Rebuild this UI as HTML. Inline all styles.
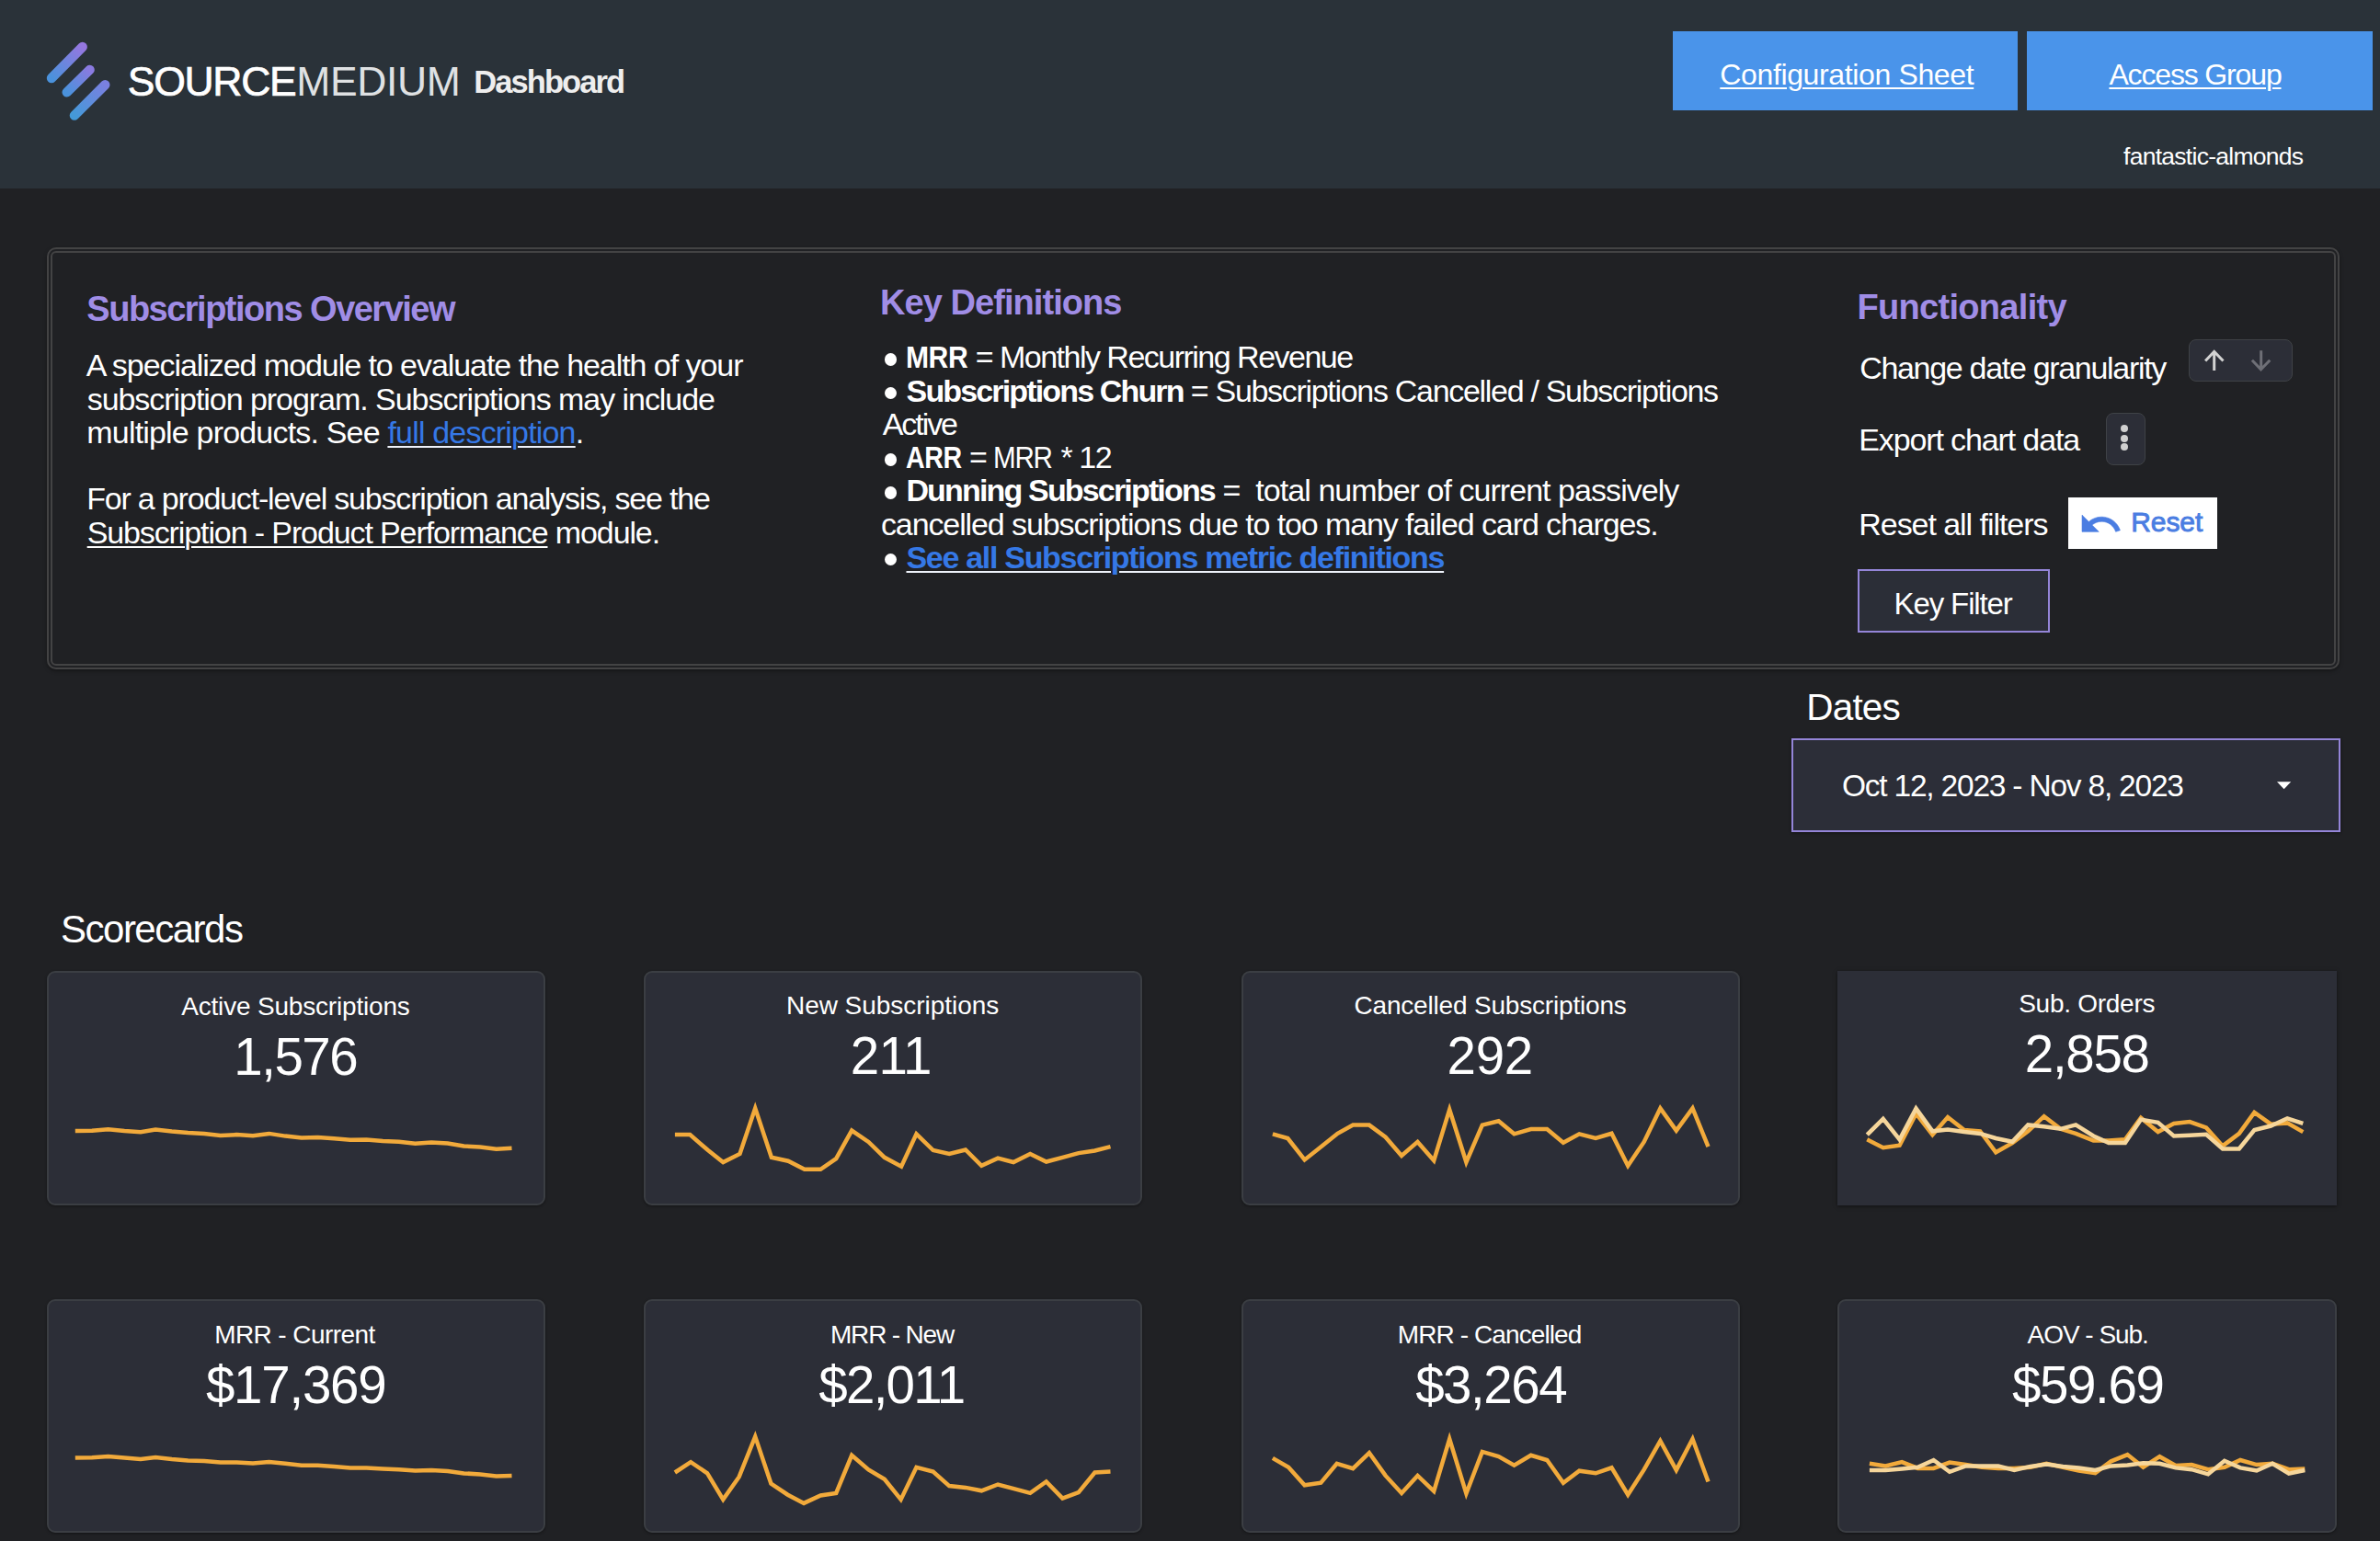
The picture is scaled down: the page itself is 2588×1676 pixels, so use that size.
<!DOCTYPE html><html><head><meta charset="utf-8"><style>
html,body{margin:0;padding:0;}
body{width:2588px;height:1676px;background:#202124;position:relative;overflow:hidden;font-family:"Liberation Sans",sans-serif;}
.t{position:absolute;white-space:pre;}
.b{position:absolute;box-sizing:border-box;}
u{text-decoration:underline;text-decoration-thickness:2px;text-underline-offset:3px;}
</style></head><body>
<div class="b" style="left:0.0px;top:0.0px;width:2588.0px;height:205.0px;background:#2a3239;"></div>
<svg style="position:absolute;left:0;top:0" width="140" height="140">
<defs><linearGradient id="lg1" x1="56" y1="85" x2="89.7" y2="51" gradientUnits="userSpaceOnUse">
<stop offset="0" stop-color="#4a92dc"/><stop offset="1" stop-color="#9577e0"/></linearGradient>
<linearGradient id="lg2" x1="72.7" y1="100.4" x2="97.6" y2="75.9" gradientUnits="userSpaceOnUse">
<stop offset="0" stop-color="#4a92dc"/><stop offset="1" stop-color="#8a7ae0"/></linearGradient>
<linearGradient id="lg3" x1="80.9" y1="125.6" x2="114.3" y2="92.2" gradientUnits="userSpaceOnUse">
<stop offset="0" stop-color="#4499d8"/><stop offset="1" stop-color="#7a80e0"/></linearGradient></defs>
<g stroke-width="10.4" stroke-linecap="round" fill="none">
<line x1="56" y1="85" x2="89.7" y2="51" stroke="url(#lg1)"/>
<line x1="72.7" y1="100.4" x2="97.6" y2="75.9" stroke="url(#lg2)"/>
<line x1="80.9" y1="125.6" x2="114.3" y2="92.2" stroke="url(#lg3)"/>
</g></svg>
<div class="b" style="left:1819.0px;top:34.0px;width:374.5px;height:85.5px;background:#4a94ea;"></div>
<div class="b" style="left:2204.0px;top:34.0px;width:375.5px;height:85.5px;background:#4a94ea;"></div>
<div class="b" style="left:50.6px;top:269.1px;width:2493.6px;height:458.6px;border:6px double #434344;border-radius:10px;box-shadow:0 2px 4px rgba(0,0,0,0.35);"></div>
<div class="b" style="left:961.8px;top:384.4px;width:13.6px;height:13.6px;background:#fff;border-radius:50%;"></div>
<div class="b" style="left:961.8px;top:420.6px;width:13.6px;height:13.6px;background:#fff;border-radius:50%;"></div>
<div class="b" style="left:961.8px;top:493.1px;width:13.6px;height:13.6px;background:#fff;border-radius:50%;"></div>
<div class="b" style="left:961.8px;top:529.4px;width:13.6px;height:13.6px;background:#fff;border-radius:50%;"></div>
<div class="b" style="left:961.8px;top:601.9px;width:13.6px;height:13.6px;background:#fff;border-radius:50%;"></div>
<div class="b" style="left:2380.0px;top:369.0px;width:112.6px;height:46.2px;background:#2c2e37;border:1.5px solid #3f4246;border-radius:8px;"></div>
<svg style="position:absolute;left:2380px;top:369px" width="113" height="47">
<g fill="none" stroke-width="3.0" stroke-linecap="butt">
<path d="M27.7 34.1V13.5 M18.1 23.5L27.7 13.4L37.5 23.5" stroke="#d2d2d2"/>
<path d="M78.7 12.3V33 M68.9 22.7L78.5 32.8L88.3 22.7" stroke="#6e6f76"/>
</g></svg>
<div class="b" style="left:2289.6px;top:448.7px;width:43.6px;height:57.2px;background:#2c2e37;border:1.5px solid #3f4246;border-radius:8px;"></div>
<div class="b" style="left:2306.1px;top:462.4px;width:8.0px;height:8.0px;background:#d0d0d0;border-radius:50%;"></div>
<div class="b" style="left:2306.1px;top:472.5px;width:8.0px;height:8.0px;background:#d0d0d0;border-radius:50%;"></div>
<div class="b" style="left:2306.1px;top:482.4px;width:8.0px;height:8.0px;background:#d0d0d0;border-radius:50%;"></div>
<div class="b" style="left:2249.0px;top:541.0px;width:162.0px;height:55.8px;background:#fff;"></div>
<svg style="position:absolute;left:2260px;top:545.5px" width="48.5" height="48.5" viewBox="0 0 24 24">
<path fill="#4a7de2" stroke="#4a7de2" stroke-width="0.3" d="M12.5 8c-2.65 0-5.05.99-6.9 2.6L2 7v9h9l-3.62-3.62c1.39-1.16 3.16-1.88 5.12-1.88 3.54 0 6.55 2.31 7.6 5.5l2.37-.78C21.08 11.03 17.15 8 12.5 8z"/></svg>
<div class="b" style="left:2020.0px;top:619.0px;width:208.8px;height:69.3px;background:#2b2e37;border:2px solid #9485d8;"></div>
<div class="b" style="left:1947.7px;top:803.3px;width:596.9px;height:101.9px;background:#2c2e38;border:2px solid #9485d8;box-shadow:0 1px 3px rgba(0,0,0,0.45);"></div>
<svg style="position:absolute;left:2474px;top:848px" width="20" height="12"><path d="M2 2.2H17.2L9.6 10.3Z" fill="#fff"/></svg>
<div class="b" style="left:50.8px;top:1056.2px;width:542.4px;height:254.4px;background:#2c2e37;border:2px solid #3b3e43;border-radius:9px;box-shadow:0 1px 3px rgba(0,0,0,0.4);"></div>
<div class="b" style="left:699.5px;top:1056.2px;width:542.4px;height:254.4px;background:#2c2e37;border:2px solid #3b3e43;border-radius:9px;box-shadow:0 1px 3px rgba(0,0,0,0.4);"></div>
<div class="b" style="left:1349.5px;top:1056.2px;width:542.4px;height:254.4px;background:#2c2e37;border:2px solid #3b3e43;border-radius:9px;box-shadow:0 1px 3px rgba(0,0,0,0.4);"></div>
<div class="b" style="left:1997.9px;top:1056.2px;width:543.4px;height:254.4px;background:#2c2e37;box-shadow:0 1px 4px rgba(0,0,0,0.5);"></div>
<div class="b" style="left:50.8px;top:1413.0px;width:542.4px;height:254.0px;background:#2c2e37;border:2px solid #3b3e43;border-radius:9px;box-shadow:0 1px 3px rgba(0,0,0,0.4);"></div>
<div class="b" style="left:699.5px;top:1413.0px;width:542.4px;height:254.0px;background:#2c2e37;border:2px solid #3b3e43;border-radius:9px;box-shadow:0 1px 3px rgba(0,0,0,0.4);"></div>
<div class="b" style="left:1349.5px;top:1413.0px;width:542.4px;height:254.0px;background:#2c2e37;border:2px solid #3b3e43;border-radius:9px;box-shadow:0 1px 3px rgba(0,0,0,0.4);"></div>
<div class="b" style="left:1997.9px;top:1413.0px;width:543.4px;height:254.0px;background:#2c2e37;border:2px solid #3b3e43;border-radius:9px;box-shadow:0 1px 3px rgba(0,0,0,0.4);"></div>
<div class="t" style="left:138.73px;top:60.78px;font-size:44.5px;line-height:56px;font-weight:400;color:#fff;letter-spacing:-1.266px;-webkit-text-stroke:0.7px #fff;">SOURCE</div>
<div class="t" style="left:322.30px;top:60.78px;font-size:44.5px;line-height:56px;font-weight:400;color:#dfe1e3;letter-spacing:-0.370px;">MEDIUM</div>
<div class="t" style="left:515.20px;top:67.55px;font-size:34.5px;line-height:43px;font-weight:700;color:#eeeeee;letter-spacing:-1.913px;">Dashboard</div>
<div class="t" style="left:1821.03px;top:60.61px;font-size:32px;line-height:40px;font-weight:400;color:#fff;letter-spacing:-0.365px;width:374.5px;text-align:center;"><u>Configuration Sheet</u></div>
<div class="t" style="left:2199.22px;top:60.61px;font-size:32px;line-height:40px;font-weight:400;color:#fff;letter-spacing:-1.154px;width:375.5px;text-align:center;"><u>Access Group</u></div>
<div class="t" style="left:2309.00px;top:154.02px;font-size:26.5px;line-height:33px;font-weight:400;color:#fff;letter-spacing:-0.725px;">fantastic-almonds</div>
<div class="t" style="left:94.37px;top:311.93px;font-size:38px;line-height:48px;font-weight:700;color:#a08de6;letter-spacing:-1.514px;">Subscriptions Overview</div>
<div class="t" style="left:93.69px;top:376.22px;font-size:34px;line-height:42px;font-weight:400;color:#fff;letter-spacing:-1.052px;">A specialized module to evaluate the health of your</div>
<div class="t" style="left:94.68px;top:412.52px;font-size:34px;line-height:42px;font-weight:400;color:#fff;letter-spacing:-1.044px;">subscription program. Subscriptions may include</div>
<div class="t" style="left:94.32px;top:448.82px;font-size:34px;line-height:42px;font-weight:400;color:#fff;letter-spacing:-0.815px;">multiple products. See <u style="color:#3578e6;text-decoration-color:#eef2fa">full description</u>.</div>
<div class="t" style="left:94.14px;top:521.42px;font-size:34px;line-height:42px;font-weight:400;color:#fff;letter-spacing:-1.188px;">For a product-level subscription analysis, see the</div>
<div class="t" style="left:94.68px;top:557.72px;font-size:34px;line-height:42px;font-weight:400;color:#fff;letter-spacing:-1.111px;"><u>Subscription - Product Performance</u> module.</div>
<div class="t" style="left:956.96px;top:305.33px;font-size:38px;line-height:48px;font-weight:700;color:#a08de6;letter-spacing:-0.934px;">Key Definitions</div>
<div class="t" style="left:985.22px;top:367.42px;font-size:34px;line-height:42px;font-weight:400;color:#fff;letter-spacing:-1.510px;"><b style="display:inline-block;width:67.5px;letter-spacing:-0.5px"><span style="display:inline-block;transform:scaleX(0.885);transform-origin:0 0">MRR</span></b> = Monthly Recurring Revenue</div>
<div class="t" style="left:985.58px;top:403.67px;font-size:34px;line-height:42px;font-weight:400;color:#fff;letter-spacing:-1.305px;"><b style="letter-spacing:-1.85px">Subscriptions Churn</b> = Subscriptions Cancelled / Subscriptions</div>
<div class="t" style="left:959.75px;top:439.92px;font-size:34px;line-height:42px;font-weight:400;color:#fff;letter-spacing:-2.062px;">Active</div>
<div class="t" style="left:985.04px;top:476.17px;font-size:34px;line-height:42px;font-weight:400;color:#fff;letter-spacing:-1.446px;"><b style="display:inline-block;width:61px;letter-spacing:-0.5px"><span style="display:inline-block;transform:scaleX(0.84);transform-origin:0 0">ARR</span></b> = <span style="display:inline-block;width:65px"><span style="display:inline-block;transform:scaleX(0.87);transform-origin:0 0">MRR</span></span> * 12</div>
<div class="t" style="left:985.40px;top:512.42px;font-size:34px;line-height:42px;font-weight:400;color:#fff;letter-spacing:-0.948px;"><b style="letter-spacing:-1.83px">Dunning Subscriptions</b> =  total number of current passively</div>
<div class="t" style="left:957.95px;top:548.67px;font-size:34px;line-height:42px;font-weight:400;color:#fff;letter-spacing:-1.105px;">cancelled subscriptions due to too many failed card charges.</div>
<div class="t" style="left:985.49px;top:584.92px;font-size:34px;line-height:42px;font-weight:700;color:#fff;letter-spacing:-1.302px;"><b><u style="color:#3578e6;text-decoration-color:#eef2fa">See all Subscriptions metric definitions</u></b></div>
<div class="t" style="left:2019.49px;top:310.03px;font-size:38px;line-height:48px;font-weight:700;color:#a08de6;letter-spacing:-0.693px;">Functionality</div>
<div class="t" style="left:2022.17px;top:379.22px;font-size:34px;line-height:42px;font-weight:400;color:#fff;letter-spacing:-1.308px;">Change date granularity</div>
<div class="t" style="left:2021.27px;top:456.82px;font-size:34px;line-height:42px;font-weight:400;color:#fff;letter-spacing:-1.126px;">Export chart data</div>
<div class="t" style="left:2021.27px;top:549.42px;font-size:34px;line-height:42px;font-weight:400;color:#fff;letter-spacing:-1.047px;">Reset all filters</div>
<div class="t" style="left:2317.22px;top:549.21px;font-size:30px;line-height:38px;font-weight:400;color:#4a7de2;letter-spacing:-0.073px;-webkit-text-stroke:0.9px #4a7de2;">Reset</div>
<div class="t" style="left:2019.25px;top:636.27px;font-size:33px;line-height:41px;font-weight:400;color:#fff;letter-spacing:-1.130px;width:208.8px;text-align:center;">Key Filter</div>
<div class="t" style="left:1964.32px;top:744.07px;font-size:40.5px;line-height:51px;font-weight:400;color:#fff;letter-spacing:-0.850px;">Dates</div>
<div class="t" style="left:2002.90px;top:834.39px;font-size:33.5px;line-height:42px;font-weight:400;color:#fff;letter-spacing:-1.206px;">Oct 12, 2023 - Nov 8, 2023</div>
<div class="t" style="left:66.05px;top:985.45px;font-size:42px;line-height:52px;font-weight:400;color:#fff;letter-spacing:-1.510px;">Scorecards</div>
<div class="t" style="left:50.23px;top:1076.60px;font-size:28px;line-height:35px;font-weight:400;color:#fff;letter-spacing:-0.183px;width:542.4px;text-align:center;">Active Subscriptions</div>
<div class="t" style="left:50.08px;top:1113.52px;font-size:56.5px;line-height:71px;font-weight:400;color:#fff;letter-spacing:-1.480px;width:542.4px;text-align:center;">1,576</div>
<div class="t" style="left:699.40px;top:1076.30px;font-size:28px;line-height:35px;font-weight:400;color:#fff;letter-spacing:-0.038px;width:542.4px;text-align:center;">New Subscriptions</div>
<div class="t" style="left:697.61px;top:1113.32px;font-size:56.5px;line-height:71px;font-weight:400;color:#fff;letter-spacing:-0.580px;width:542.4px;text-align:center;">211</div>
<div class="t" style="left:1349.38px;top:1076.30px;font-size:28px;line-height:35px;font-weight:400;color:#fff;letter-spacing:-0.183px;width:542.4px;text-align:center;">Cancelled Subscriptions</div>
<div class="t" style="left:1348.96px;top:1113.32px;font-size:56.5px;line-height:71px;font-weight:400;color:#fff;letter-spacing:-0.400px;width:542.4px;text-align:center;">292</div>
<div class="t" style="left:1997.51px;top:1074.40px;font-size:28px;line-height:35px;font-weight:400;color:#fff;letter-spacing:-0.267px;width:543.4px;text-align:center;">Sub. Orders</div>
<div class="t" style="left:1997.57px;top:1111.42px;font-size:56.5px;line-height:71px;font-weight:400;color:#fff;letter-spacing:-1.278px;width:543.4px;text-align:center;">2,858</div>
<div class="t" style="left:49.21px;top:1433.60px;font-size:28px;line-height:35px;font-weight:400;color:#fff;letter-spacing:-0.578px;width:542.4px;text-align:center;">MRR - Current</div>
<div class="t" style="left:50.50px;top:1471.22px;font-size:56.5px;line-height:71px;font-weight:400;color:#fff;letter-spacing:-1.240px;width:542.4px;text-align:center;">$17,369</div>
<div class="t" style="left:698.84px;top:1433.80px;font-size:28px;line-height:35px;font-weight:400;color:#fff;letter-spacing:-1.174px;width:542.4px;text-align:center;">MRR - New</div>
<div class="t" style="left:698.19px;top:1471.12px;font-size:56.5px;line-height:71px;font-weight:400;color:#fff;letter-spacing:-1.732px;width:542.4px;text-align:center;">$2,011</div>
<div class="t" style="left:1348.44px;top:1433.80px;font-size:28px;line-height:35px;font-weight:400;color:#fff;letter-spacing:-0.902px;width:542.4px;text-align:center;">MRR - Cancelled</div>
<div class="t" style="left:1349.99px;top:1471.12px;font-size:56.5px;line-height:71px;font-weight:400;color:#fff;letter-spacing:-1.462px;width:542.4px;text-align:center;">$3,264</div>
<div class="t" style="left:1998.52px;top:1434.30px;font-size:28px;line-height:35px;font-weight:400;color:#fff;letter-spacing:-1.030px;width:543.4px;text-align:center;">AOV - Sub.</div>
<div class="t" style="left:1998.58px;top:1471.02px;font-size:56.5px;line-height:71px;font-weight:400;color:#fff;letter-spacing:-1.408px;width:543.4px;text-align:center;">$59.69</div>
<svg style="position:absolute;left:0;top:0" width="2588" height="1676"><polyline points="81.8,1230.0 100.0,1229.7 117.6,1228.2 135.3,1230.0 152.9,1231.2 169.1,1228.5 186.8,1230.6 204.4,1232.1 222.1,1232.9 239.7,1235.0 257.4,1234.1 275.0,1235.3 292.6,1232.9 310.3,1235.6 327.9,1237.6 345.6,1237.1 363.2,1238.2 380.9,1239.7 398.5,1239.4 416.2,1240.9 433.8,1241.8 451.5,1243.8 469.1,1242.4 486.8,1243.5 504.4,1246.5 522.1,1247.6 539.7,1249.7 556.5,1248.8" fill="none" stroke="#f2aa3b" stroke-width="4.5" stroke-linejoin="miter" stroke-miterlimit="10"/><polyline points="733.9,1234.1 750.3,1234.1 769.9,1251.0 786.3,1264.0 804.5,1254.9 821.2,1205.4 838.9,1258.8 857.1,1262.7 874.8,1271.8 892.3,1271.8 909.2,1260.1 926.2,1229.6 944.4,1241.9 961.8,1258.8 980.1,1268.7 996.5,1233.3 1014.7,1251.0 1032.2,1254.9 1049.9,1250.5 1067.3,1267.9 1085.1,1259.6 1102.0,1264.0 1120.2,1254.9 1137.7,1263.5 1155.4,1258.8 1172.8,1254.1 1190.5,1251.5 1207.5,1247.1" fill="none" stroke="#f2aa3b" stroke-width="4.5" stroke-linejoin="miter" stroke-miterlimit="10"/><polyline points="1383.9,1233.3 1400.3,1238.0 1418.6,1261.4 1436.8,1247.1 1454.5,1232.8 1471.2,1223.6 1488.9,1223.6 1506.6,1236.7 1524.1,1257.0 1541.5,1241.9 1559.2,1262.2 1576.2,1206.7 1594.4,1264.0 1611.8,1223.6 1629.6,1219.2 1646.5,1233.3 1664.7,1228.1 1682.2,1228.1 1699.9,1242.7 1717.3,1233.3 1735.1,1238.0 1752.5,1232.8 1770.2,1267.9 1787.7,1241.9 1805.4,1205.4 1822.8,1229.6 1840.5,1205.4 1857.5,1247.1" fill="none" stroke="#f2aa3b" stroke-width="4.5" stroke-linejoin="miter" stroke-miterlimit="10"/><polyline points="81.8,1585.6 100.0,1585.3 117.6,1584.1 135.3,1585.6 152.9,1587.1 169.1,1585.0 186.8,1587.1 204.4,1588.5 222.1,1589.1 239.7,1590.6 257.4,1590.6 275.0,1591.5 292.6,1590.0 310.3,1591.8 327.9,1593.8 345.6,1593.8 363.2,1595.0 380.9,1596.5 398.5,1596.5 416.2,1597.4 433.8,1598.2 451.5,1599.4 469.1,1599.1 486.8,1600.0 504.4,1602.4 522.1,1603.5 539.7,1605.6 556.5,1605.0" fill="none" stroke="#f2aa3b" stroke-width="4.5" stroke-linejoin="miter" stroke-miterlimit="10"/><polyline points="733.9,1601.5 751.1,1590.1 769.1,1602.3 786.3,1630.9 803.7,1606.2 821.2,1562.4 838.4,1613.5 856.6,1625.7 874.1,1634.9 892.3,1626.5 909.2,1623.9 926.2,1582.8 944.4,1598.4 961.8,1608.8 979.6,1630.9 996.5,1595.8 1014.7,1600.5 1032.2,1616.1 1049.9,1617.9 1067.3,1621.3 1085.1,1614.5 1102.5,1619.2 1120.2,1623.9 1137.7,1611.4 1155.4,1629.6 1172.8,1623.1 1190.5,1601.5 1207.5,1600.5" fill="none" stroke="#f2aa3b" stroke-width="4.5" stroke-linejoin="miter" stroke-miterlimit="10"/><polyline points="1383.9,1585.9 1401.1,1595.8 1418.6,1615.3 1436.3,1612.7 1453.7,1591.9 1471.2,1597.1 1488.9,1580.2 1506.6,1604.9 1524.1,1623.9 1541.5,1604.9 1559.2,1621.8 1576.2,1565.0 1594.4,1624.4 1611.8,1578.9 1629.6,1584.1 1646.5,1593.7 1664.7,1582.8 1682.2,1588.0 1699.9,1612.7 1717.3,1599.7 1735.1,1602.3 1752.5,1596.3 1770.2,1625.7 1787.7,1598.4 1805.4,1567.1 1822.8,1598.9 1840.5,1565.0 1857.5,1611.4" fill="none" stroke="#f2aa3b" stroke-width="4.5" stroke-linejoin="miter" stroke-miterlimit="10"/><polyline points="2030.3,1239.3 2047.7,1248.2 2065.6,1245.7 2083.5,1211.2 2101.4,1234.2 2118.0,1215.0 2135.9,1229.1 2153.2,1230.3 2170.3,1253.3 2188.2,1243.1 2205.3,1230.3 2222.7,1214.2 2240.6,1227.8 2257.2,1232.9 2276.4,1240.6 2293.0,1240.6 2310.9,1239.3 2328.0,1215.8 2346.6,1231.1 2363.8,1221.9 2381.1,1220.1 2399.0,1226.5 2416.9,1246.4 2434.8,1232.9 2451.4,1209.9 2469.3,1222.7 2487.2,1221.4 2504.3,1231.1" fill="none" stroke="#f2aa3b" stroke-width="4.5" stroke-linejoin="miter" stroke-miterlimit="10"/><polyline points="2030.3,1234.2 2047.7,1216.8 2065.6,1239.3 2083.5,1205.6 2101.4,1230.3 2118.0,1228.6 2135.9,1231.1 2153.2,1232.9 2170.3,1238.0 2188.2,1241.8 2205.3,1223.4 2222.7,1225.2 2240.6,1227.8 2257.2,1223.4 2276.4,1235.5 2293.0,1243.1 2310.9,1243.1 2328.0,1217.6 2346.6,1220.9 2363.8,1235.5 2381.1,1234.7 2399.0,1233.7 2416.9,1249.5 2434.8,1249.5 2451.4,1229.1 2469.3,1224.5 2487.2,1216.3 2504.3,1221.9" fill="none" stroke="#f6d69b" stroke-width="4.5" stroke-linejoin="miter" stroke-miterlimit="10"/><polyline points="2032.9,1591.8 2050.3,1594.4 2068.1,1590.1 2085.3,1596.9 2102.6,1596.9 2120.0,1590.6 2137.6,1593.1 2155.0,1595.7 2172.9,1596.9 2190.3,1596.9 2207.9,1595.7 2225.3,1591.8 2243.2,1595.7 2260.5,1599.5 2278.4,1602.1 2295.5,1589.3 2313.4,1582.1 2330.5,1595.7 2348.4,1584.2 2365.8,1593.9 2383.2,1593.1 2401.1,1598.2 2418.9,1595.7 2436.1,1588.0 2453.9,1593.1 2471.1,1591.8 2488.9,1598.2 2506.3,1597.5" fill="none" stroke="#f2aa3b" stroke-width="4.5" stroke-linejoin="miter" stroke-miterlimit="10"/><polyline points="2032.9,1599.0 2050.3,1599.0 2068.1,1597.5 2085.3,1595.7 2102.6,1588.0 2120.0,1600.8 2137.6,1594.4 2155.0,1594.4 2172.9,1594.4 2190.3,1599.0 2207.9,1594.9 2225.3,1592.4 2243.2,1594.9 2260.5,1596.4 2278.4,1599.0 2295.5,1594.4 2313.4,1593.6 2330.5,1591.3 2348.4,1591.8 2365.8,1596.4 2383.2,1598.2 2401.1,1603.3 2418.9,1588.8 2436.1,1596.4 2453.9,1599.5 2471.1,1591.8 2488.9,1602.6 2506.3,1599.0" fill="none" stroke="#f6d69b" stroke-width="4.5" stroke-linejoin="miter" stroke-miterlimit="10"/></svg>
</body></html>
